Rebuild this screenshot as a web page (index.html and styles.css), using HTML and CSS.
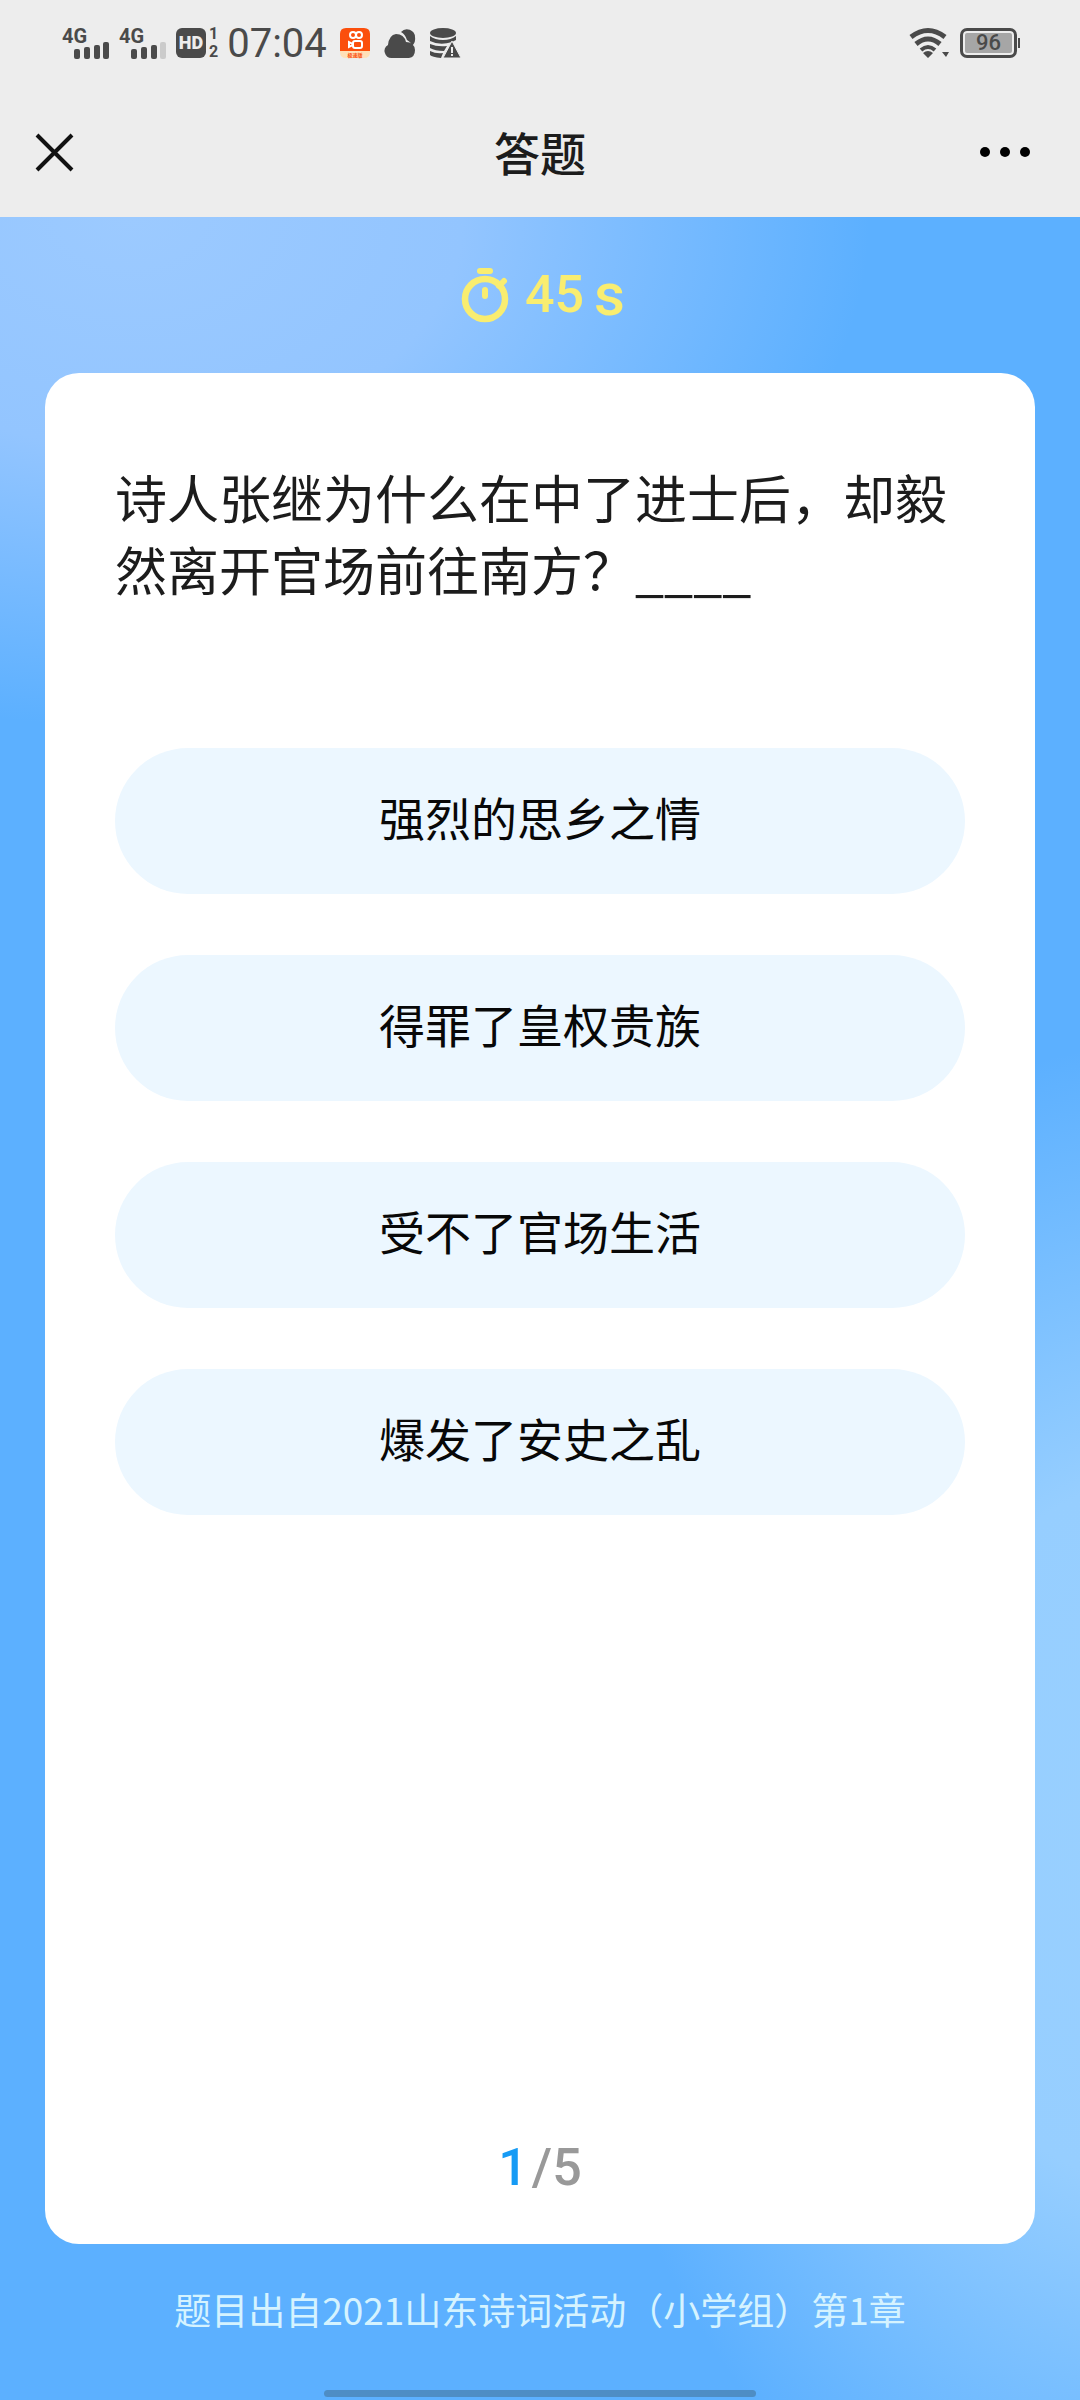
FILE: index.html
```html
<!DOCTYPE html>
<html lang="zh-CN">
<head>
<meta charset="utf-8">
<meta name="viewport" content="width=device-width, initial-scale=1">
<title>答题</title>
<link rel="stylesheet" href="styles.css">
</head>
<body>
<div class="status">
  <div class="status-group">
    <svg class="signal" viewBox="0 0 48 32" aria-hidden="true">
      <text class="net" x="0" y="16">4G</text>
      <g fill="#4a4a4a"><rect x="12" y="22" width="6" height="10" rx="2"/><rect x="22" y="20" width="6" height="12" rx="2"/><rect x="32" y="18" width="6" height="14" rx="2"/><rect x="41" y="15" width="6" height="17" rx="2"/></g>
    </svg>
    <svg class="signal" viewBox="0 0 48 32" aria-hidden="true">
      <text class="net" x="0" y="16">4G</text>
      <g fill="#4a4a4a"><rect x="12" y="22" width="6" height="10" rx="2"/><rect x="22" y="20" width="6" height="12" rx="2"/><rect x="32" y="18" width="6" height="14" rx="2"/><rect x="41" y="15" width="6" height="17" rx="2" fill="#cbcbcb"/></g>
    </svg>
    <div class="volte"><span class="hd">HD</span><span class="sims"><span>1</span><span>2</span></span></div>
    <time class="clock">07:04</time>
    <div class="notices">
      <svg viewBox="0 0 30 30" aria-hidden="true">
        <path d="M6 0H24Q30 0 30 6V23H0V6Q0 0 6 0Z" fill="#fb4f0c"/>
        <path d="M0 23H30V24Q30 30 24 30H6Q0 30 0 24Z" fill="#ffe0b8"/>
        <g fill="none" stroke="#fff" stroke-width="2"><circle cx="13" cy="7" r="3"/><circle cx="19" cy="7" r="3"/><rect x="13" y="13" width="9" height="7" rx="2"/><path d="M9 14V19L13 17V16Z"/></g>
        <text class="badge" x="15" y="29" text-anchor="middle">极速版</text>
      </svg>
      <svg viewBox="0 0 30 30" aria-hidden="true" fill="#4a4a4a">
        <path d="M16 4A8 8 0 0 1 30 9Q31 14 27 18Q26 14 22 12Q20 6 16 4Z"/>
        <path d="M7 30A7 7 0 0 1 3 17Q4 7 11 6Q19 6 21 14Q29 14 30 22Q30 29 24 30Z"/>
      </svg>
      <svg viewBox="0 0 30 30" aria-hidden="true" fill="#4a4a4a">
        <ellipse cx="13" cy="5" rx="13" ry="5"/>
        <path d="M0 8Q5 12 13 12Q21 12 26 8V12L22 14Q10 18 0 13ZM0 16Q7 19 17 18L14 23Q5 23 0 20ZM0 23Q6 26 13 25L11 30Q2 29 0 27Z"/>
        <path d="M22 13L31 30H13Z" stroke="#ededed" stroke-width="1"/>
        <path d="M21 19H23V25H21ZM21 26H23V28H21Z" fill="#ededed"/>
      </svg>
    </div>
  </div>
  <div class="status-group power">
    <svg class="wifi" viewBox="0 0 40 30" aria-hidden="true">
      <g fill="none" stroke="#4a4a4a" stroke-width="5"><path d="M1 9Q18 -4 35 9"/><path d="M6 16Q18 6 30 16"/><path d="M11 22Q18 16 25 22" stroke-width="4"/></g>
      <path d="M13 25Q18 21 23 25L18 30ZM32 24H39L36 29Z" fill="#4a4a4a"/>
    </svg>
    <div class="battery">96</div>
  </div>
</div>
<header class="nav">
  <button class="icon-button" aria-label="关闭"><svg viewBox="0 0 40 40" width="40" height="40"><path d="M3 3L38 38M38 3L3 38" stroke="#111" stroke-width="4"/></svg></button>
  <h1>答题</h1>
  <button class="icon-button" aria-label="更多"><svg viewBox="0 0 50 40" width="50" height="40"><circle cx="5" cy="20" r="5"/><circle cx="25" cy="20" r="5"/><circle cx="45" cy="20" r="5"/></svg></button>
</header>
<main class="quiz">
  <div class="timer">
    <svg viewBox="0 0 48 56" width="48" height="56" aria-hidden="true">
      <g fill="none" stroke="#f9ed70" stroke-linecap="round"><circle cx="24" cy="32" r="20" stroke-width="6.500"/><path d="M19 4H29" stroke-width="6"/><path d="M24 23V29" stroke-width="6"/><path d="M38 19L43 14" stroke-width="6"/></g>
    </svg>
    <span class="digits">45</span><span class="unit">s</span>
  </div>
  <section class="card">
    <h2>诗人张继为什么在中了进士后，却毅然离开官场前往南方？____</h2>
    <div class="options">
      <button>强烈的思乡之情</button>
      <button>得罪了皇权贵族</button>
      <button>受不了官场生活</button>
      <button>爆发了安史之乱</button>
    </div>
    <p class="pager"><span class="current">1</span><span>/5</span></p>
  </section>
  <footer>
    <p>题目出自2021山东诗词活动（小学组）第1章</p>
    <div class="home-bar"></div>
  </footer>
</main>
</body>
</html>
```
FILE: styles.css
```css
* { box-sizing: border-box; }
body {
  margin: 0;
  min-height: 100vh;
  display: flex;
  flex-direction: column;
  background: #ededed;
  color: #1c1c1c;
  font-family: "Noto Sans CJK SC", sans-serif;
}
h1, h2, p { margin: 0; font-weight: 400; }
button { border: 0; padding: 0; font: inherit; color: #080808; background: none; }
svg { display: block; overflow: visible; }

.status {
  display: flex;
  justify-content: space-between;
  align-items: center;
  height: 86px;
  padding: 0 63px 0 62px;
  color: #4a4a4a;
  font-family: Roboto, sans-serif;
}
.status-group { display: flex; align-items: center; gap: 9px; }
.signal { width: 48px; height: 32px; }
.net { font: 700 20px Roboto, sans-serif; fill: #4a4a4a; }
.volte { display: flex; gap: 3px; align-items: center; }
.hd {
  width: 30px;
  line-height: 30px;
  border-radius: 6px;
  background: #4a4a4a;
  color: #ededed;
  font-size: 18px;
  font-weight: 900;
  text-align: center;
}
.sims { display: grid; font-size: 16px; line-height: 18px; font-weight: 700; }
.clock { font-size: 40px; line-height: 48px; padding-top: 2px; }
.notices { display: flex; gap: 15px; margin-left: 4px; }
.notices svg { width: 30px; height: 30px; }
.badge { font: 700 5px "Noto Sans CJK SC", sans-serif; fill: #fb4f0c; }
.power { gap: 10px; }
.wifi { width: 40px; height: 30px; }
.battery {
  position: relative;
  width: 57px;
  height: 30px;
  border: 3px solid #4a4a4a;
  border-radius: 7px;
  background: #a6a6a6;
  box-shadow: inset 0 0 0 2px #ededed;
  font-size: 22px;
  line-height: 24px;
  font-weight: 500;
  text-align: center;
}
.battery::after {
  content: "";
  position: absolute;
  right: -6px;
  top: 7px;
  width: 2px;
  height: 10px;
  background: #4a4a4a;
}

.nav {
  display: grid;
  grid-template-columns: 1fr auto 1fr;
  align-items: center;
  height: 131px;
  padding: 0 34px;
}
.nav h1 { font-size: 46px; line-height: 60px; font-weight: 500; padding-bottom: 2px; }
.icon-button { justify-self: start; }
.icon-button:last-child { justify-self: end; padding-right: 16px; }

.quiz {
  flex: 1;
  display: flex;
  flex-direction: column;
  padding: 0 45px;
  background:
    radial-gradient(ellipse 740px 510px at 130px 0, #9ccaff 0, #93c5ff 45%, #5cb0ff00 100%),
    radial-gradient(ellipse 600px 790px at 108% 74%, #99d0ff 0, #96ceff 45%, #5cb0ff00 100%),
    #5cb0ff;
}
.timer {
  display: flex;
  align-items: center;
  justify-content: center;
  height: 156px;
  padding-left: 6px;
  color: #f9ed70;
}
.digits, .pager { font-family: Roboto, sans-serif; font-weight: 500; font-size: 52px; line-height: 60px; }
.digits { margin: 0 10px 0 16px; }
.unit { font: 500 60px/60px Roboto, sans-serif; }

.card {
  flex: 1;
  display: flex;
  flex-direction: column;
  padding: 88px 70px 46px;
  border-radius: 34px;
  background: #fff;
}
.card h2 { font-size: 52px; line-height: 72px; }
.options { display: grid; gap: 61px; margin: 143px 0 auto; }
.options button {
  height: 146px;
  padding-bottom: 10px;
  border-radius: 73px;
  background: #ecf7ff;
  font-size: 46px;
}
.pager { display: flex; justify-content: center; gap: 4px; color: #999; }
.current { color: #169bf5; }

footer { text-align: center; padding: 38px 0 3px; }
footer p { color: #d5f3ff; font-size: 37px; line-height: 54px; }
.home-bar { width: 432px; max-width: 60%; height: 7px; margin: 54px auto 0; border-radius: 4px; background: #4e8dc4; }
```
